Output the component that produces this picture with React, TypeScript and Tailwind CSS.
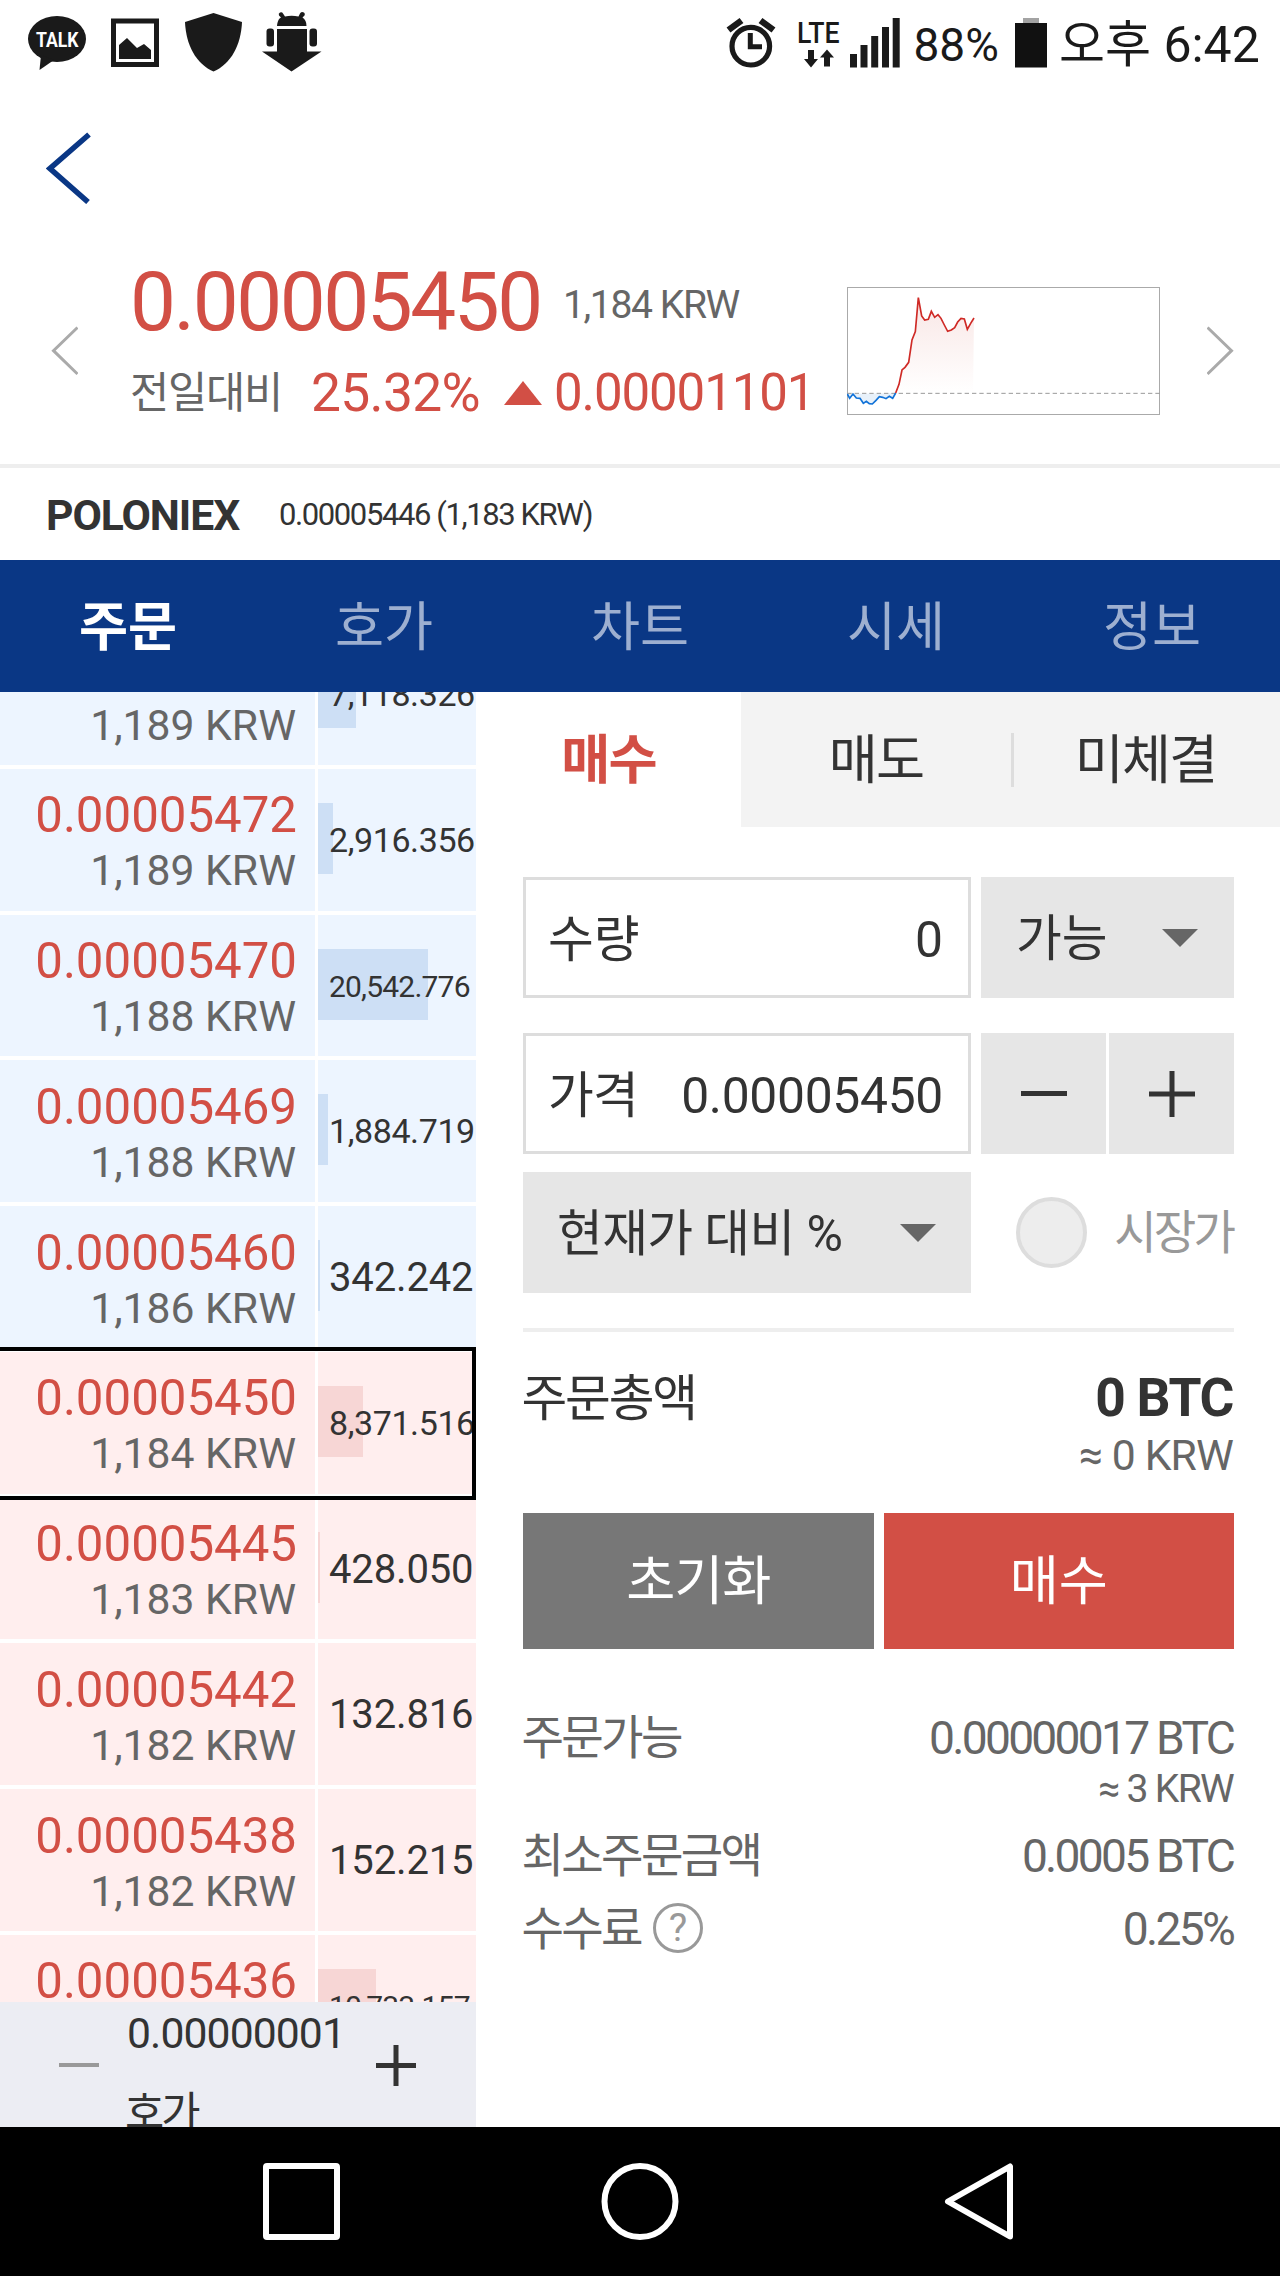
import React from "react";
import clsx from "clsx";

type Order = {
    price: string;
    krw: string;
    amount: string;
    bar: number;
    side: "ask" | "bid";
    selected?: boolean;
};

const ORDERS: Order[] = [
    { price: "0.00005475", krw: "1,189", amount: "7,118.326", bar: 38, side: "ask" },
    { price: "0.00005472", krw: "1,189", amount: "2,916.356", bar: 15, side: "ask" },
    { price: "0.00005470", krw: "1,188", amount: "20,542.776", bar: 110, side: "ask" },
    { price: "0.00005469", krw: "1,188", amount: "1,884.719", bar: 10, side: "ask" },
    { price: "0.00005460", krw: "1,186", amount: "342.242", bar: 2, side: "ask" },
    { price: "0.00005450", krw: "1,184", amount: "8,371.516", bar: 45, side: "bid", selected: true },
    { price: "0.00005445", krw: "1,183", amount: "428.050", bar: 2, side: "bid" },
    { price: "0.00005442", krw: "1,182", amount: "132.816", bar: 0, side: "bid" },
    { price: "0.00005438", krw: "1,182", amount: "152.215", bar: 0, side: "bid" },
    { price: "0.00005436", krw: "1,182", amount: "10,733.157", bar: 58, side: "bid" },
];

const TABS = ["주문", "호가", "차트", "시세", "정보"];

const RISE =
    "183,355 193,329 202,286 211,278 222,263 232,196 242,171 251,69 261,124 270,136 281,134 290,110 300,128 310,120 319,131 329,151 339,170 350,166 360,159 369,142 379,131 389,133 398,164 408,146 418,130";
const FALL =
    "38,358 45,371 55,358 65,370 76,371 86,386 95,380 104,387 113,388 124,377 134,366 144,368 154,372 164,365 174,371 183,355";

// longer amounts are set smaller so they fit the column
const amountSize = (amount: string) => {
    if (amount.length > 9) return "text-[30px] tracking-[-0.8px]";
    if (amount.length > 7) return "text-[34px] tracking-[-0.4px]";
    return "text-[40px] tracking-[-0.15px]";
};

const StatusBar = () => (
    <div className="flex h-[86px] text-[#1a1a1a]">
        <svg className="ml-[28px]" width="58" height="86" viewBox="28 0 58 86" fill="currentColor">
            <ellipse cx="57" cy="39" rx="29" ry="23" />
            <path d="M41 55 39.5 70 54 60Z" />
            <text
                x="36"
                y="46.7"
                fill="white"
                fontSize="20"
                fontWeight="700"
                textLength="42.5"
                lengthAdjust="spacingAndGlyphs"
            >
                TALK
            </text>
        </svg>
        <svg className="ml-[25px]" width="48" height="86" viewBox="111 0 48 86">
            <rect x="113.5" y="21" width="43" height="43.5" fill="white" stroke="currentColor" strokeWidth="5" />
            <path d="M119 59V45L127 38 137 48 144 44 151 50V59Z" fill="currentColor" />
        </svg>
        <svg className="ml-[26px]" width="57" height="86" viewBox="185 0 57 86" fill="currentColor">
            <path d="M213.5 13 242 22C241 45 231 64 213.5 71.5 196 64 186 45 185 22Z" />
        </svg>
        <svg className="ml-[20px]" width="60" height="86" viewBox="262 0 60 86" fill="currentColor">
            <path d="M277 26C277.5 21 279 18.5 281 17.5L279 15.5A2 2 0 0 1 283 13.5L285 16.5Q291.5 15 298.5 16.5L300 13.5A2 2 0 0 1 304.5 15.5L302.5 17.5Q306.5 20 306.5 26Z" />
            <path d="M277 29H307V51.5H321.5L291.5 71.5 262 51.5H277Z" />
            <rect x="266.5" y="28.5" width="7.5" height="18" rx="3" />
            <rect x="309.5" y="28.5" width="7.5" height="18" rx="3" />
        </svg>
        <svg className="ml-[404px]" width="50" height="86" viewBox="726 0 50 86" fill="none" stroke="currentColor">
            <circle cx="750.8" cy="46.2" r="18.8" strokeWidth="5.2" />
            <path d="M750.3 33V46.7H762" strokeWidth="5" />
            <path d="M728.5 30 741.5 20.5M760.5 20.5 773.5 30" strokeWidth="6.5" />
        </svg>
        <svg className="ml-[22px]" width="42" height="86" viewBox="798 0 42 86" fill="currentColor">
            <text
                x="797"
                y="42.7"
                fontSize="29.5"
                fontWeight="500"
                textLength="42.5"
                lengthAdjust="spacingAndGlyphs"
            >
                LTE
            </text>
            <path d="M808 50h6v9h4l-7 8.5-7-8.5h4ZM824 66.5v-9h-4l7-8 7 8h-4v9Z" />
        </svg>
        <svg className="ml-[10px]" width="50" height="86" viewBox="850 0 50 86" fill="currentColor">
            <path d="M850 54h7v13.5h-7ZM860.5 45h7v22.5h-7ZM871.2 36h7v31.5h-7ZM882 27h7v40.5h-7ZM892.7 18h7v49.5h-7Z" />
        </svg>
        <span className="ml-[13.5px] w-[101.5px] text-[46px] leading-[90px]">88%</span>
        <svg width="32" height="86" viewBox="1015 0 32 86">
            <path d="M1023 18h16v5h-16Z" fill="#a3a3a3" />
            <path d="M1015 23h32v44.5h-32Z" fill="#111" />
        </svg>
        <span className="ml-3 text-[50px] leading-[91px] whitespace-nowrap">오후 6:42</span>
    </div>
);

const Chevron = ({ flip }: { flip?: boolean }) => (
    <svg
        className={clsx("mt-[90px]", flip ? "ml-[47px] -scale-x-100" : "ml-[51px]")}
        width="27"
        height="50"
        viewBox="0 0 27 50"
        fill="none"
        stroke="#aaa"
        strokeWidth="3"
    >
        <path d="M26.5 1.5 2.5 24.7 26.5 48" />
    </svg>
);

const MiniChart = () => (
    <svg className="mt-[51px]" width="313" height="128" viewBox="37 37 939 384" fill="none">
        <defs>
            <linearGradient id="rise" x1="0" y1="0" x2="0" y2="1">
                <stop offset="0" stopColor="#d24f45" stopOpacity="0.14" />
                <stop offset="1" stopColor="#d24f45" stopOpacity="0" />
            </linearGradient>
        </defs>
        <polygon points={`${RISE} 415,355`} fill="url(#rise)" />
        <polygon points={FALL} fill="#1976d2" fillOpacity="0.1" />
        <rect x="38.5" y="38.5" width="936" height="381" stroke="#aaa" strokeWidth="3" />
        <path d="M38 356H975" stroke="#999" strokeWidth="3" strokeDasharray="13 9" />
        <polyline points={FALL} stroke="#1273d8" strokeWidth="5" />
        <polyline points={RISE} stroke="#cf2a26" strokeWidth="5" />
    </svg>
);

const Ticker = () => (
    <>
        <div className="flex h-[228px]">
            <Chevron />
            <div className="ml-[52px] w-[717px] pt-[22px]">
                <div className="flex h-[88px] leading-[88px] whitespace-nowrap">
                    <span className="w-[433px] text-[81.8px] tracking-[-0.03em] text-[#d24f45]">
                        0.00005450
                    </span>
                    <span className="pt-[3px] text-[39.1px] tracking-[-0.036em] text-[#666]">
                        1,184 KRW
                    </span>
                </div>
                <div className="flex h-[94px] leading-[94px] whitespace-nowrap text-[#d24f45]">
                    <span className="w-[181px] text-[42.67px] tracking-[-0.03em] text-[#666]">
                        전일대비
                    </span>
                    <span className="w-[193px] text-[53.33px] tracking-[-0.7px]">25.32%</span>
                    <svg className="mt-[35px]" width="38" height="24" viewBox="0 0 38 24" fill="currentColor">
                        <path d="M19 0 38 24H0Z" />
                    </svg>
                    <span className="ml-[12px] text-[51px] tracking-[-1.1px]">0.00001101</span>
                </div>
            </div>
            <MiniChart />
            <Chevron flip />
        </div>
        <div className="flex h-[96px] border-t-4 border-[#eee] pl-[46px] leading-[94px] whitespace-nowrap text-[#333]">
            <span className="w-[233px] text-[42.67px] font-bold tracking-[-0.025em]">POLONIEX</span>
            <span className="text-[31px] tracking-[-1.4px]">0.00005446 (1,183 KRW)</span>
        </div>
    </>
);

const OrderRow = ({ price, krw, amount, bar, side, selected }: Order) => {
    const bg = side === "ask" ? "bg-[#edf5ff]" : "bg-[#ffeeee]";
    return (
        <div className="relative flex h-[145.78px] gap-[3px] border-b-4 border-white whitespace-nowrap">
            <div className={clsx("w-[315px] pt-[16.5px] pr-[19px] text-right", bg)}>
                <div className="-mr-px text-[49.2px] leading-[60px] text-[#d24f45]">{price}</div>
                <div className="text-[42.67px] leading-[50px] text-[#666]">{krw} KRW</div>
            </div>
            <div className={clsx("relative w-[158px] overflow-hidden", bg)}>
                <div
                    className={clsx(
                        "absolute top-[34px] left-0 h-[71px]",
                        side === "ask" ? "bg-[#cddff5]" : "bg-[#f7d6d5]",
                    )}
                    style={{ width: bar }}
                />
                <div className={clsx("relative pl-[11px] leading-[143px] text-[#333]", amountSize(amount))}>
                    {amount}
                </div>
            </div>
            {selected && (
                <div className="absolute -top-[5px] -bottom-[6px] -left-1 z-10 w-[480px] border-4 border-black" />
            )}
        </div>
    );
};

const OrderBook = () => (
    <div className="flex w-[476px] flex-col">
        <div className="h-[1310px] overflow-hidden">
            <div className="-mt-[69px]">
                {ORDERS.map((order) => (
                    <OrderRow key={order.price} {...order} />
                ))}
            </div>
        </div>
        <div className="flex h-[125px] overflow-hidden bg-[#ecedf3] text-[#333]">
            <div className="mt-[60.5px] ml-[59px] h-[4.5px] w-[40px] bg-[#999]" />
            <div className="ml-[28px] w-[249px] text-[42.67px] tracking-[-0.9px]">
                <div className="mt-[4px] leading-[54px]">0.00000001</div>
                <div className="mt-[26px] -ml-[2px] leading-[54px] tracking-[-3px]">호가</div>
            </div>
            <svg className="mt-[43px]" width="40" height="41" viewBox="0 0 40 41" stroke="currentColor">
                <path d="M20 0V41M0 20.5H40" strokeWidth="5" />
            </svg>
        </div>
    </div>
);

const Caret = () => (
    <svg width="36" height="18" viewBox="0 0 36 18" fill="#666">
        <path d="M0 0H36L18 18Z" />
    </svg>
);

const InfoRow = ({ label, value }: { label: React.ReactNode; value: string }) => (
    <div className="flex justify-between text-[46.2px] tracking-[-2.75px]">
        <span className="flex tracking-[-2.7px]">{label}</span>
        <span>{value}</span>
    </div>
);

const OrderForm = () => (
    <div className="w-[804px] whitespace-nowrap text-[#333]">
        <div className="flex h-[135px] text-center text-[53.33px] leading-[135px] tracking-[-0.035em]">
            <div className="w-[265px] pt-[2px] font-bold text-[#d24f45]">매수</div>
            <div className="flex w-[539px] items-center bg-[#f3f3f3]">
                <div className="w-[270px] pt-[4px]">매도</div>
                <div className="h-[54px] w-[3px] bg-[#ddd]" />
                <div className="w-[263px] pt-[4px]">미체결</div>
            </div>
        </div>

        <div className="mr-[46px] ml-[47px] text-[49.78px]">
            <div className="mt-[50px] flex h-[121px] justify-between">
                <div className="flex w-[448px] justify-between border-[3.5px] border-[#ddd] pr-[25px] pl-[22px] leading-[120px]">
                    <span>수량</span>
                    <span>0</span>
                </div>
                <div className="flex w-[253px] items-center justify-between bg-[#e6e6e6] pr-[36px] pl-[35px]">
                    <span className="pt-[4px] leading-[121px]">가능</span>
                    <Caret />
                </div>
            </div>

            <div className="mt-[35px] flex h-[121px] justify-between">
                <div className="flex w-[448px] justify-between border-[3.5px] border-[#ddd] pr-[25px] pl-[22px] leading-[120px]">
                    <span className="tracking-[-0.8px]">가격</span>
                    <span className="tracking-[-0.3px]">0.00005450</span>
                </div>
                <div className="flex w-[253px] gap-[3px]">
                    <div className="flex flex-1 items-center justify-center bg-[#e6e6e6]">
                        <div className="h-[5px] w-[46px] bg-[#333]" />
                    </div>
                    <div className="flex flex-1 items-center justify-center bg-[#e6e6e6]">
                        <svg width="46" height="46" viewBox="0 0 46 46" stroke="#333" strokeWidth="5">
                            <path d="M23 0V46M0 23H46" />
                        </svg>
                    </div>
                </div>
            </div>

            <div className="mt-[18px] flex h-[121px] items-center">
                <div className="flex h-full w-[448px] items-center justify-between bg-[#e6e6e6] pr-[35px] pl-[34px]">
                    <span className="pt-[4px] leading-[121px] tracking-[-0.6px]">현재가 대비 %</span>
                    <Caret />
                </div>
                <div className="ml-[45px] h-[71px] w-[71px] rounded-full border-4 border-[#ddd] bg-[#ededed]" />
                <span className="mr-[1px] ml-auto pt-[2px] text-[46.2px] tracking-[-2.9px] text-[#999]">시장가</span>
            </div>

            <div className="mt-[35px] h-[4px] bg-[#eee]" />

            <div className="mt-[35px] mr-px flex justify-between leading-[62px]">
                <span className="-ml-[1.5px] pt-[1px] tracking-[-2.2px]">주문총액</span>
                <span className="text-[53.33px] font-bold tracking-[-0.025em]">0 BTC</span>
            </div>
            <div className="-mt-[2px] mr-px text-right text-[42.67px] leading-[54px] tracking-[-0.02em] text-[#666]">
                ≈ 0 KRW
            </div>

            <div className="mt-[31px] grid h-[136px] grid-cols-2 grid-rows-[136px] gap-[10px] text-center text-[53.33px] leading-[139px] text-white">
                <div className="bg-[#777] tracking-[-1px]">초기화</div>
                <div className="bg-[#d24f45]">매수</div>
            </div>

            <div className="mt-[59px] mr-px -ml-[1.5px] leading-[60px] text-[#666]">
                <InfoRow label="주문가능" value="0.00000017 BTC" />
                <div className="h-[58px] text-right text-[39.1px] leading-[42px] tracking-[-1.7px]">≈ 3 KRW</div>
                <InfoRow label="최소주문금액" value="0.0005 BTC" />
                <div className="mt-[13px]">
                    <InfoRow
                        label={
                            <>
                                수수료
                                <span className="mt-[4px] ml-[12px] h-[50px] w-[50px] rounded-full border-[3px] border-[#999] text-center text-[39px] leading-[44px] tracking-normal text-[#999]">
                                    ?
                                </span>
                            </>
                        }
                        value="0.25%"
                    />
                </div>
            </div>
        </div>
    </div>
);

const SystemNav = () => (
    <div className="flex h-[149px] bg-black">
        <svg width="1280" height="149" viewBox="0 2127 1280 149" fill="none" stroke="white" strokeWidth="6">
            <rect x="266" y="2166" width="71" height="71" rx="1" />
            <circle cx="640" cy="2201.5" r="35.5" />
            <path d="M1010 2166.5V2236.5L948 2201.5Z" strokeLinejoin="round" />
        </svg>
    </div>
);

const App = () => {
    return (
        <div className="h-[2276px] w-[1280px] overflow-hidden bg-white font-['Roboto','Noto_Sans_CJK_KR',sans-serif]">
            <StatusBar />
            <div className="h-[150px]">
                <svg
                    className="ml-[46px] pt-[46px]"
                    width="46"
                    height="118"
                    viewBox="0 0 46 72"
                    fill="none"
                    stroke="#0a3785"
                    strokeWidth="5.5"
                >
                    <path d="M43 2.5 4 36.5 42 70" />
                </svg>
            </div>
            <Ticker />
            <div className="flex h-[132px] bg-[#0a3785] text-center text-[53.33px] leading-[136px]">
                {TABS.map((tab, i) => (
                    <div key={tab} className={clsx("flex-1", i === 0 ? "font-bold text-white" : "text-[#9dafd0]")}>
                        {tab}
                    </div>
                ))}
            </div>
            <div className="flex h-[1435px]">
                <OrderBook />
                <OrderForm />
            </div>
            <SystemNav />
        </div>
    );
};

export default App;
